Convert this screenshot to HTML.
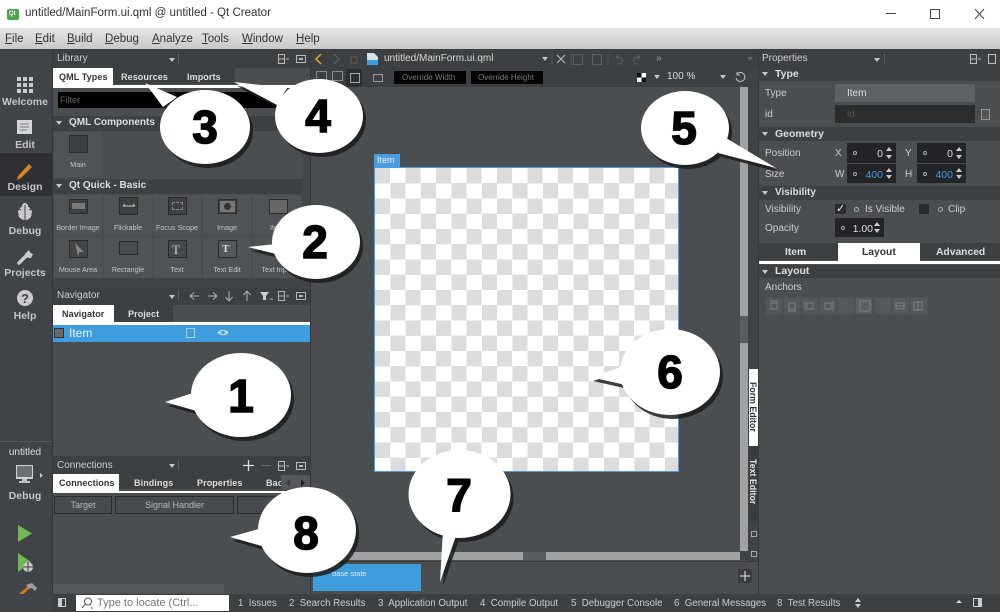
<!DOCTYPE html>
<html><head><meta charset="utf-8"><style>
html,body{margin:0;padding:0;background:#4b4e51}
#p{position:relative;width:1000px;height:612px;overflow:hidden;background:#4b4e51;font-family:"Liberation Sans",sans-serif;color:#d8d8d8}
#p div{position:absolute;box-sizing:border-box}
.t{position:absolute;white-space:nowrap;line-height:1}
.b{font-weight:bold}
.m{font-size:11.5px;color:#333;top:34px}
.sb{font-size:10.5px;font-weight:bold;color:#c4c6c8;width:52px;text-align:center}
.cell{width:50px;height:42px;background:#505356;border:1px solid #4a4d50}
.ic{width:19px;height:18px;background:#3e4042;border:1px solid #2b2c2e}
.lb{font-size:7.2px;color:#c2c4c6;text-align:center;width:50px}
.sec{background:#3e4144;height:15px}
.tab{font-size:9px;letter-spacing:.1px}
.rt{font-size:10.3px}
.h{font-size:10px;color:#ddd;font-weight:bold}
.spin{background:#222427;height:20px;width:49px}
.spin .n{position:absolute;right:13px;top:6px;font-size:10.5px;line-height:1;color:#ddd}
.spin .n.bl{color:#3f9fe0}
.spin .o{position:absolute;left:6px;top:8px;width:2px;height:2px;border:1px solid #aaa;border-radius:50%}
.spin .u{position:absolute;right:4px;top:4px;width:0;height:0;border:3px solid transparent;border-bottom:4px solid #ccc;border-top:0}
.spin .d{position:absolute;right:4px;bottom:4px;width:0;height:0;border:3px solid transparent;border-top:4px solid #ccc;border-bottom:0}
.tri{position:absolute;width:0;height:0;border:3px solid transparent;border-top:4px solid #c8c8c8;border-bottom:0}
.anch{width:18px;height:18px;background:#55585b;border:1px solid #4e5154;top:297px}
.ot{font-size:9.7px;color:#c9cbcd;top:599px}
.l{font-size:10px;color:#ccc}
</style></head><body><div id="p">

<!-- title bar -->
<div style="left:0;top:0;width:1000px;height:28px;background:#fff"></div>
<div style="left:7px;top:9px;width:12px;height:11px;background:#4ea64a;border-radius:2px"></div>
<span class="t" style="left:9px;top:11px;font-size:6px;color:#fff;font-weight:bold">Qt</span>
<span class="t" style="left:25px;top:8px;font-size:11.55px;color:#333">untitled/MainForm.ui.qml @ untitled - Qt Creator</span>
<svg style="position:absolute;left:880px;top:6px" width="120" height="16" fill="none" stroke="#444" stroke-width="1"><path d="M6 7.5H16"/><rect x="50.5" y="3.5" width="9" height="9"/><path d="M95 3L104 13M104 3L95 13"/></svg>

<!-- menu -->
<div style="left:0;top:28px;width:1000px;height:21px;background:linear-gradient(#e6e6e6,#c8c8c8)"></div>
<div style="left:0;top:49px;width:1000px;height:1px;background:#3a3c3e"></div>
<span class="t m" style="left:5px"><u>F</u>ile</span>
<span class="t m" style="left:35px"><u>E</u>dit</span>
<span class="t m" style="left:67px"><u>B</u>uild</span>
<span class="t m" style="left:105px"><u>D</u>ebug</span>
<span class="t m" style="left:152px"><u>A</u>nalyze</span>
<span class="t m" style="left:202px"><u>T</u>ools</span>
<span class="t m" style="left:242px"><u>W</u>indow</span>
<span class="t m" style="left:296px"><u>H</u>elp</span>

<!-- mode sidebar -->
<div style="left:0;top:50px;width:52px;height:562px;background:#404347"></div>
<div style="left:0;top:153px;width:52px;height:43px;background:#2e3033"></div>
<div style="left:0;top:441px;width:52px;height:1px;background:#55585b"></div>
<svg style="position:absolute;left:0;top:70px" width="52" height="240">
<g fill="#c8cacc"><rect x="17" y="7" width="4" height="4"/><rect x="23" y="7" width="4" height="4"/><rect x="29" y="7" width="4" height="4"/><rect x="17" y="13" width="4" height="4"/><rect x="23" y="13" width="4" height="4"/><rect x="29" y="13" width="4" height="4"/><rect x="17" y="19" width="4" height="4"/><rect x="23" y="19" width="4" height="4"/><rect x="29" y="19" width="4" height="4"/></g>
<rect x="17" y="50" width="15" height="14" fill="#d4d6d8"/><path d="M20 54H29M20 57H29M20 60H27" stroke="#777" stroke-width="1"/>
<path d="M18 106L29 94L32 97L21 108L17 110Z" fill="#d9832a"/>
<ellipse cx="25" cy="143" rx="7" ry="7" fill="#c8cacc"/><circle cx="25" cy="136" r="3" fill="#c8cacc"/><path d="M25 135V151M17 138L21 140M33 138L29 140M16 144H19M34 144H31" stroke="#404347" stroke-width="1"/>
<path d="M19 193L27 185" stroke="#c8cacc" stroke-width="3.5" stroke-linecap="round"/><path d="M25 184A5 5 0 0 0 31 188L33 184A5 5 0 0 1 29 180Z" fill="#c8cacc"/>
<circle cx="25" cy="228" r="8" fill="#c8cacc"/>
<text x="25" y="233" font-size="13" font-weight="bold" fill="#404347" text-anchor="middle" font-family="Liberation Sans, sans-serif">?</text>
</svg>
<span class="t sb" style="left:-1px;top:97px">Welcome</span>
<span class="t sb" style="left:-1px;top:140px">Edit</span>
<span class="t sb" style="left:-1px;top:182px">Design</span>
<span class="t sb" style="left:-1px;top:226px">Debug</span>
<span class="t sb" style="left:-1px;top:268px">Projects</span>
<span class="t sb" style="left:-1px;top:311px">Help</span>
<span class="t" style="left:0;top:448px;width:50px;text-align:center;font-size:10px;color:#ddd">untitled</span>
<svg style="position:absolute;left:14px;top:464px" width="32" height="26"><rect x="2" y="1" width="17" height="14" fill="#d0d2d4"/><rect x="3" y="2" width="15" height="11" fill="#6d7073"/><rect x="8" y="15" width="5" height="3" fill="#c0c2c4"/><rect x="5" y="17" width="11" height="2" fill="#c0c2c4"/><path d="M26 9V14L29 11.500Z" fill="#ccc"/></svg>
<span class="t sb" style="left:-1px;top:491px">Debug</span>
<svg style="position:absolute;left:14px;top:520px" width="26" height="90">
<path d="M4 5V22L18 13.500Z" fill="#73b856"/>
<path d="M4 33V52L17 42Z" fill="#73b856"/><ellipse cx="14" cy="47" rx="5" ry="5" fill="#c8cacc"/><path d="M14 42V52M9 47H19" stroke="#404347"/>
<path d="M4 77L16 66" stroke="#d0772a" stroke-width="3"/><path d="M12 65L18 63L23 68L21 71L18 68L15 69Z" fill="#9a9c9e"/>
</svg>

<!-- left panel -->
<div style="left:52px;top:50px;width:258px;height:18px;background:#3d4043"></div>
<span class="t" style="left:57px;top:54px;font-size:10px;color:#ccc">Library</span>
<div class="tri" style="left:169px;top:58px"></div>
<div style="left:178px;top:53px;width:1px;height:11px;background:#5a5d60"></div>
<svg style="position:absolute;left:276px;top:53px" width="32" height="12" fill="none" stroke="#bbb"><path d="M2.500 1.500H8.500V10.500H2.500ZM2.500 6H8.500"/><path d="M10 6H13" /><rect x="20.500" y="2.500" width="9" height="7"/><rect x="23" y="5" width="4" height="2" fill="#bbb" stroke="none"/></svg>

<div style="left:52px;top:68px;width:183px;height:16px;background:#3d4043"></div>
<div style="left:52px;top:85px;width:258px;height:3px;background:#fff"></div>
<div style="left:52px;top:68px;width:61px;height:18px;background:#fff"></div>
<span class="t b tab" style="left:59px;top:73px;color:#333">QML Types</span>
<span class="t b tab" style="left:121px;top:73px;color:#ddd">Resources</span>
<span class="t b tab" style="left:187px;top:73px;color:#ddd">Imports</span>
<div style="left:58px;top:92px;width:240px;height:16px;background:#000"></div>
<span class="t" style="left:60px;top:96px;font-size:9px;color:#666">Filter</span>

<div class="sec" style="left:52px;top:116px;width:250px;height:15px"></div>
<div class="tri" style="left:56px;top:121px"></div>
<span class="t h" style="left:69px;top:118px">QML Components</span>
<div class="cell" style="left:53px;top:131px;height:47px"></div>
<div class="ic" style="left:69px;top:135px"></div>
<span class="t lb" style="left:53px;top:161px">Main</span>
<div class="sec" style="left:52px;top:179px;width:250px"></div>
<div class="tri" style="left:56px;top:184px"></div>
<span class="t h" style="left:69px;top:181px">Qt Quick - Basic</span>

<div class="cell" style="left:53px;top:194px"></div><div class="ic" style="left:69px;top:199px;height:15px"></div>
<div style="left:72px;top:203px;width:13px;height:6px;background:#777"></div>
<span class="t lb" style="left:53px;top:224px">Border Image</span>
<div class="cell" style="left:103px;top:194px"></div><div class="ic" style="left:119px;top:197px"></div>
<svg style="position:absolute;left:120px;top:199px" width="18" height="14" stroke="#ccc" fill="none"><path d="M3 7H15M3 7L5 5.500M15 7L13 5.500"/></svg>
<span class="t lb" style="left:103px;top:224px">Flickable</span>
<div class="cell" style="left:152px;top:194px"></div><div class="ic" style="left:168px;top:197px"></div>
<div style="left:172px;top:202px;width:11px;height:8px;border:1px dashed #888"></div>
<span class="t lb" style="left:152px;top:224px">Focus Scope</span>
<div class="cell" style="left:202px;top:194px"></div><div class="ic" style="left:218px;top:199px;height:15px"></div>
<div style="left:220px;top:201px;width:15px;height:11px;background:#777"></div>
<div style="left:224px;top:203px;width:7px;height:7px;background:#333;border-radius:50%"></div>
<span class="t lb" style="left:202px;top:224px">Image</span>
<div class="cell" style="left:252px;top:194px"></div><div class="ic" style="left:269px;top:199px;height:15px;background:#666"></div>
<span class="t lb" style="left:252px;top:224px">Item</span>

<div class="cell" style="left:53px;top:237px"></div><div class="ic" style="left:69px;top:240px;background:#444"></div>
<svg style="position:absolute;left:71px;top:241px" width="15" height="16"><path d="M4 2L13 11L8.500 11L7 15Z" fill="#888"/></svg>
<span class="t lb" style="left:53px;top:266px">Mouse Area</span>
<div class="cell" style="left:103px;top:237px"></div><div class="ic" style="left:119px;top:241px;height:14px;background:#484a4c"></div>
<span class="t lb" style="left:103px;top:266px">Rectangle</span>
<div class="cell" style="left:152px;top:237px"></div><div class="ic" style="left:168px;top:240px;background:#46484a"></div>
<span class="t" style="left:172px;top:243px;font-size:13px;font-family:'Liberation Serif',serif;color:#ccc">T</span>
<span class="t lb" style="left:152px;top:266px">Text</span>
<div class="cell" style="left:202px;top:237px"></div><div class="ic" style="left:218px;top:240px;background:#55585a"></div>
<span class="t" style="left:222px;top:244px;font-size:11px;font-weight:bold;font-family:'Liberation Serif',serif;color:#ddd">T</span>
<span class="t lb" style="left:202px;top:266px">Text Edit</span>
<div class="cell" style="left:252px;top:237px"></div>
<span class="t lb" style="left:252px;top:266px">Text Input</span>

<div style="left:52px;top:278px;width:258px;height:10px;background:#424548"></div>
<div style="left:302px;top:88px;width:8px;height:190px;background:#44474a"></div>

<!-- navigator -->
<div style="left:52px;top:288px;width:258px;height:17px;background:#3d4043"></div>
<span class="t" style="left:57px;top:291px;font-size:10px;color:#ccc">Navigator</span>
<div class="tri" style="left:169px;top:295px"></div>
<div style="left:178px;top:290px;width:1px;height:11px;background:#5a5d60"></div>
<svg style="position:absolute;left:186px;top:289px" width="122" height="14" fill="none" stroke="#b0b2b4">
<path d="M4 7H13M4 7L8 3.500M4 7L8 10.500"/><path d="M22 7H31M31 7L27 3.500M31 7L27 10.500"/><path d="M43 2V12M43 12L39.500 8M43 12L46.500 8"/><path d="M61 12V2M61 2L57.500 6M61 2L64.500 6"/>
<path d="M74 3H83L80 7V11H77V7Z" fill="#ccc" stroke="none"/><path d="M84 10H87" />
<path d="M92.500 2.500H98.500V11.500H92.500ZM92.500 7H98.500M100 7H103"/><rect x="110.500" y="3.500" width="9" height="7"/><rect x="113" y="6" width="4" height="2" fill="#bbb" stroke="none"/>
</svg>
<div style="left:52px;top:305px;width:121px;height:17px;background:#3d4043"></div>
<div style="left:52px;top:305px;width:62px;height:18px;background:#fff"></div>
<span class="t b tab" style="left:62px;top:310px;color:#333">Navigator</span>
<span class="t b tab" style="left:128px;top:310px;color:#ddd">Project</span>
<div style="left:52px;top:322px;width:258px;height:3px;background:#fff"></div>
<div style="left:52px;top:325px;width:258px;height:17px;background:#3f9ddd"></div>
<div style="left:54px;top:328px;width:10px;height:10px;background:#6a6a6a;border:1px solid #333"></div>
<span class="t" style="left:69px;top:327px;font-size:12px;color:#eaf4fb">Item</span>
<div style="left:186px;top:328px;width:9px;height:10px;border:1px solid #a9d3ef"></div>
<svg style="position:absolute;left:216px;top:328px" width="14" height="9"><path d="M1 4.500Q7 -1 13 4.500Q7 10 1 4.500Z" fill="#b9dcf3"/><circle cx="7" cy="4.500" r="1.800" fill="#3f9ddd"/></svg>

<!-- connections -->
<div style="left:52px;top:456px;width:258px;height:18px;background:#3d4043"></div>
<span class="t" style="left:57px;top:461px;font-size:10px;color:#ccc">Connections</span>
<div class="tri" style="left:169px;top:464px"></div>
<div style="left:178px;top:459px;width:1px;height:11px;background:#5a5d60"></div>
<svg style="position:absolute;left:240px;top:459px" width="68" height="14" fill="none"><path d="M3 6.500H14M8.500 1V12" stroke="#ddd" stroke-width="1.300"/><path d="M21 6.500H31" stroke="#666"/><g stroke="#bbb"><path d="M38.500 2.500H44.500V11.500H38.500ZM38.500 7H44.500M46 7H49"/><rect x="56.500" y="3.500" width="9" height="7"/></g><rect x="59" y="6" width="4" height="2" fill="#bbb"/></svg>
<div style="left:52px;top:474px;width:258px;height:15px;background:#3d4043"></div>
<div style="left:52px;top:474px;width:67px;height:17px;background:#fff"></div>
<div style="left:52px;top:491px;width:258px;height:2px;background:#fff"></div>
<span class="t b tab" style="left:59px;top:479px;color:#333">Connections</span>
<span class="t b tab" style="left:134px;top:479px;color:#ddd">Bindings</span>
<span class="t b tab" style="left:197px;top:479px;color:#ddd">Properties</span>
<span class="t b tab" style="left:266px;top:479px;color:#ddd">Bac</span>
<div style="left:281px;top:475px;width:29px;height:14px;background:#55585b"></div>
<div style="left:286px;top:479px;border:4px solid transparent;border-right:4px solid #3a3c3e;border-left:0"></div>
<div style="left:301px;top:479px;border:4px solid transparent;border-left:4px solid #222;border-right:0"></div>
<div style="left:54px;top:496px;width:58px;height:18px;background:#484b4e;border:1px solid #2a2c2e"></div>
<span class="t" style="left:54px;top:501px;width:58px;text-align:center;font-size:9px;color:#b5b7b9">Target</span>
<div style="left:115px;top:496px;width:119px;height:18px;background:#484b4e;border:1px solid #2a2c2e"></div>
<span class="t" style="left:115px;top:501px;width:119px;text-align:center;font-size:9px;color:#b5b7b9">Signal Handler</span>
<div style="left:237px;top:496px;width:60px;height:18px;background:#484b4e;border:1px solid #2a2c2e"></div>
<div style="left:52px;top:584px;width:172px;height:9px;background:#55585b"></div>

<div style="left:52px;top:50px;width:1px;height:544px;background:#35373a"></div>
<div style="left:310px;top:50px;width:1px;height:544px;background:#35373a"></div>

<!-- centre toolbar -->
<div style="left:311px;top:50px;width:447px;height:19px;background:#3d4043"></div>
<div style="left:311px;top:69px;width:447px;height:18px;background:#3d4043"></div>
<svg style="position:absolute;left:311px;top:50px" width="350" height="38" fill="none">
<path d="M10 4L5 9L10 14" stroke="#e0a92b" stroke-width="1.500"/><path d="M23 4L28 9L23 14" stroke="#666"/>
<rect x="40" y="7" width="6" height="6" stroke="#5c5e60"/>
<path d="M56 3H63L67 7V14H56Z" fill="#d6dee6"/><rect x="56" y="10" width="11" height="5" fill="#3f9ddd"/>
<path d="M246 5L254 13M254 5L246 13" stroke="#b5b7b9" stroke-width="1.200"/><rect x="262.500" y="4.500" width="9" height="10" stroke="#5c5e60"/><rect x="281.500" y="4.500" width="9" height="10" stroke="#5c5e60"/>
<path d="M241 3V15M260 3V15M297 3V15" stroke="#55585b"/>
<path d="M305 7L308 5M305 7L308 9M305 7H309A4 4 0 0 1 309 14H306" stroke="#5c5e60"/><path d="M329 7L326 5M329 7L326 9M329 7H325A4 4 0 0 0 325 14H328" stroke="#5c5e60"/>
<path d="M5.500 21.500H15.500V30.500H5.500ZM21.500 21.500H31.500V30.500H21.500Z" stroke="#8a8c8e"/>
</svg>
<span class="t" style="left:384px;top:54px;font-size:10px;color:#d8d8d8">untitled/MainForm.ui.qml</span>
<div class="tri" style="left:542px;top:57px"></div>
<span class="t" style="left:656px;top:54px;font-size:10px;color:#999">»</span>
<div class="tri" style="left:747px;top:57px;border-top-color:#666"></div>
<div style="left:346px;top:69px;width:16px;height:18px;background:#2c2e30"></div>
<div style="left:350px;top:73px;width:10px;height:10px;border:1px solid #aaa"></div>
<div style="left:373px;top:74px;width:10px;height:8px;border:1px solid #999"></div>
<div style="left:394px;top:71px;width:72px;height:13px;background:#050505"></div>
<span class="t" style="left:402px;top:74px;font-size:8px;color:#777">Override Width</span>
<div style="left:471px;top:71px;width:72px;height:13px;background:#050505"></div>
<span class="t" style="left:478px;top:74px;font-size:8px;color:#777">Override Height</span>
<div style="left:637px;top:73px;width:9px;height:9px;background:conic-gradient(#fff 25%,#111 0 50%,#fff 0 75%,#111 0)"></div>
<div class="tri" style="left:654px;top:75px"></div>
<span class="t" style="left:667px;top:72px;font-size:10px;color:#ddd">100 %</span>
<div class="tri" style="left:720px;top:75px"></div>
<svg style="position:absolute;left:734px;top:71px" width="12" height="12" fill="none"><path d="M3 3A4.500 4.500 0 1 1 2 7M3 1V4H6" stroke="#bbb"/></svg>

<!-- canvas -->
<div style="left:311px;top:87px;width:429px;height:464px;background:#4b4e51"></div>
<div style="left:374px;top:154px;width:26px;height:13px;background:#4b9be0"></div>
<span class="t" style="left:377px;top:156px;font-size:9px;color:#eef">Item</span>
<div style="left:374px;top:167px;width:305px;height:305px;background-color:#fff;background-image:conic-gradient(#fff 25%,#dcdcdc 0 50%,#fff 0 75%,#dcdcdc 0);background-size:30.500px 30.500px;background-position:0 0;border:1.500px solid #4b9be0"></div>

<!-- scrollbars -->
<div style="left:740px;top:87px;width:8px;height:464px;background:#a0a2a4"></div>
<div style="left:740px;top:316px;width:8px;height:27px;background:#5a5d60"></div>
<div style="left:311px;top:552px;width:429px;height:8px;background:#a0a2a4"></div>
<div style="left:523px;top:552px;width:23px;height:8px;background:#5a5d60"></div>
<div style="left:748px;top:69px;width:10px;height:492px;background:#404346"></div>
<div style="left:740px;top:551px;width:18px;height:9px;background:#404346"></div>
<div style="left:311px;top:561px;width:447px;height:1px;background:#393b3e"></div>
<div style="left:749px;top:369px;width:9px;height:77px;background:#fff"></div>
<div style="left:749px;top:446px;width:9px;height:76px;background:#3a3d40"></div>
<span class="t b" style="left:748px;top:382px;font-size:8.800px;color:#333;writing-mode:vertical-rl;line-height:10px">Form Editor</span>
<span class="t b" style="left:748px;top:459px;font-size:8.800px;color:#e8e8e8;writing-mode:vertical-rl;line-height:10px">Text Editor</span>
<div style="left:751px;top:531px;width:6px;height:6px;border:1px solid #aaa"></div>
<div style="left:751px;top:551px;width:6px;height:6px;border:1px solid #aaa"></div>
<div style="left:758px;top:50px;width:1px;height:544px;background:#35373a"></div>

<!-- states -->
<div style="left:313px;top:564px;width:108px;height:27px;background:#3f9ddd"></div>
<span class="t" style="left:332px;top:570px;font-size:7.500px;color:#d8eaf7">base state</span>
<div style="left:738px;top:569px;width:14px;height:14px;background:#3a3c3f"></div>
<svg style="position:absolute;left:738px;top:569px" width="14" height="14"><path d="M2 7H12M7 2V12" stroke="#ccc" stroke-width="1.300"/></svg>

<!-- right panel -->
<div style="left:759px;top:50px;width:241px;height:17px;background:#3d4043"></div>
<span class="t" style="left:762px;top:54px;font-size:10px;color:#ccc">Properties</span>
<div class="tri" style="left:874px;top:58px"></div>
<div style="left:884px;top:53px;width:1px;height:11px;background:#5a5d60"></div>
<svg style="position:absolute;left:968px;top:53px" width="32" height="12" fill="none" stroke="#bbb"><path d="M2.500 1.500H8.500V10.500H2.500ZM2.500 6H8.500M10 6H13"/><rect x="20.500" y="1.500" width="7" height="9"/></svg>
<div class="sec" style="left:759px;top:67px;width:241px;height:14px"></div>
<div class="tri" style="left:762px;top:72px"></div>
<span class="t b" style="left:775px;top:69px;font-size:10.500px;color:#ddd">Type</span>
<span class="t l" style="left:765px;top:89px">Type</span>
<div style="left:835px;top:84px;width:140px;height:18px;background:#5e6164"></div>
<span class="t" style="left:847px;top:89px;font-size:10px;color:#ddd">Item</span>
<span class="t l" style="left:765px;top:110px">id</span>
<div style="left:835px;top:105px;width:140px;height:18px;background:#2a2c2e"></div>
<span class="t" style="left:847px;top:110px;font-size:10px;color:#555">id</span>
<div style="left:981px;top:109px;width:9px;height:11px;border:1px solid #999;background:#555"></div>
<div class="sec" style="left:759px;top:127px;width:241px;height:14px"></div>
<div class="tri" style="left:762px;top:132px"></div>
<span class="t b" style="left:775px;top:129px;font-size:10.500px;color:#ddd">Geometry</span>
<span class="t l" style="left:765px;top:149px">Position</span>
<span class="t l" style="left:765px;top:170px">Size</span>
<span class="t l" style="left:835px;top:149px">X</span>
<span class="t l" style="left:835px;top:170px">W</span>
<span class="t l" style="left:905px;top:149px">Y</span>
<span class="t l" style="left:905px;top:170px">H</span>
<div class="spin" style="left:847px;top:143px"><i class="o"></i><span class="n">0</span><i class="u"></i><i class="d"></i></div>
<div class="spin" style="left:917px;top:143px"><i class="o"></i><span class="n">0</span><i class="u"></i><i class="d"></i></div>
<div class="spin" style="left:847px;top:164px;height:19px"><i class="o"></i><span class="n bl">400</span><i class="u"></i><i class="d"></i></div>
<div class="spin" style="left:917px;top:164px;height:19px"><i class="o"></i><span class="n bl">400</span><i class="u"></i><i class="d"></i></div>
<div class="sec" style="left:759px;top:186px;width:241px;height:14px"></div>
<div class="tri" style="left:762px;top:191px"></div>
<span class="t b" style="left:775px;top:188px;font-size:10px;color:#ddd">Visibility</span>
<span class="t l" style="left:765px;top:205px">Visibility</span>
<div style="left:835px;top:204px;width:11px;height:10px;background:#2a2c2e"></div>
<span class="t" style="left:836px;top:204px;font-size:11px;color:#eee">✓</span>
<div style="left:854px;top:207px;width:5px;height:5px;border:1px solid #aaa;border-radius:50%"></div>
<span class="t l" style="left:865px;top:205px">Is Visible</span>
<div style="left:919px;top:204px;width:10px;height:10px;background:#2a2c2e"></div>
<div style="left:938px;top:207px;width:5px;height:5px;border:1px solid #aaa;border-radius:50%"></div>
<span class="t l" style="left:948px;top:205px">Clip</span>
<span class="t l" style="left:765px;top:224px">Opacity</span>
<div class="spin" style="left:835px;top:218px;height:19px"><i class="o"></i><span class="n" style="right:11px">1.00</span><i class="u"></i><i class="d"></i></div>
<div style="left:759px;top:243px;width:241px;height:17px;background:#3d4043"></div>
<div style="left:838px;top:243px;width:82px;height:18px;background:#fff"></div>
<div style="left:759px;top:261px;width:241px;height:3px;background:#fff"></div>
<span class="t b rt" style="left:785px;top:248px;color:#ddd">Item</span>
<span class="t b rt" style="left:862px;top:248px;color:#333">Layout</span>
<span class="t b rt" style="left:936px;top:248px;color:#ddd">Advanced</span>
<div class="sec" style="left:759px;top:265px;width:241px;height:13px"></div>
<div class="tri" style="left:762px;top:270px"></div>
<span class="t b" style="left:775px;top:266px;font-size:10.500px;color:#ddd">Layout</span>
<span class="t l" style="left:765px;top:283px">Anchors</span>
<div class="anch" style="left:765px"></div><div class="anch" style="left:783px"></div><div class="anch" style="left:801px"></div><div class="anch" style="left:819px"></div><div class="anch" style="left:837px"></div><div class="anch" style="left:855px;background:#5c5f62"></div><div class="anch" style="left:874px"></div><div class="anch" style="left:892px"></div><div class="anch" style="left:910px"></div>
<svg style="position:absolute;left:765px;top:297px" width="165" height="18" fill="none" stroke="#7b7e81"><rect x="6" y="6" width="6" height="6"/><path d="M5 4H13"/><rect x="24" y="6" width="6" height="6"/><path d="M23 14H31"/><rect x="42" y="6" width="6" height="6"/><path d="M40 4V14"/><rect x="60" y="6" width="6" height="6"/><path d="M68 4V14"/><rect x="95" y="4" width="10" height="10"/><rect x="131" y="6" width="8" height="6"/><path d="M130 9H140"/><rect x="149" y="5" width="8" height="8"/><path d="M153 4V14"/></svg>

<!-- bottom bar -->
<div style="left:52px;top:594px;width:948px;height:18px;background:#3d4043"></div>
<div style="left:0;top:594px;width:52px;height:18px;background:#404347"></div>
<div style="left:58px;top:598px;width:8px;height:9px;border:1px solid #ccc;border-left:4px solid #ccc"></div>
<div style="left:76px;top:595px;width:153px;height:16px;background:#fff"></div>
<svg style="position:absolute;left:80px;top:596px" width="16" height="14" fill="none" stroke="#555"><circle cx="8" cy="5.500" r="3.500"/><path d="M5.500 8L2 12"/><path d="M11 12H13"/></svg>
<span class="t" style="left:97px;top:598px;font-size:11px;color:#777">Type to locate (Ctrl...</span>
<span class="t ot" style="left:238px">1&nbsp; Issues</span>
<span class="t ot" style="left:289px">2&nbsp; Search Results</span>
<span class="t ot" style="left:378px">3&nbsp; Application Output</span>
<span class="t ot" style="left:480px">4&nbsp; Compile Output</span>
<span class="t ot" style="left:571px">5&nbsp; Debugger Console</span>
<span class="t ot" style="left:674px">6&nbsp; General Messages</span>
<span class="t ot" style="left:777px">8&nbsp; Test Results</span>
<div style="left:855px;top:598px;border:3px solid transparent;border-bottom:4px solid #ccc;border-top:0"></div>
<div style="left:855px;top:604px;border:3px solid transparent;border-top:4px solid #ccc;border-bottom:0"></div>
<div style="left:956px;top:600px;border:3px solid transparent;border-bottom:3px solid #ddd;border-top:0"></div>
<div style="left:973px;top:598px;width:9px;height:9px;border:1px solid #ccc;border-right:4px solid #ccc"></div>

<!-- callouts -->
<svg style="position:absolute;left:0;top:0" width="1000" height="612">
<g fill="#1c1c1c" transform="translate(3,4)" opacity=".85">
<ellipse cx="241" cy="395" rx="50" ry="42"/><path d="M165 402L196 392L200 412Z"/>
<ellipse cx="316" cy="242" rx="44" ry="37"/><path d="M248 247L276 244L276 254Z"/>
<ellipse cx="205" cy="127" rx="45" ry="37"/><path d="M145 83L177 97L163 107Z"/>
<ellipse cx="319" cy="116" rx="44" ry="37"/><path d="M234 82L287 88L277 105Z"/>
<ellipse cx="685" cy="128" rx="44" ry="37"/><path d="M776 168L726 138L718 153Z"/>
<ellipse cx="670" cy="372" rx="50" ry="43"/><path d="M590 377L628 365L630 386Z"/>
<ellipse cx="459.500" cy="494" rx="51" ry="44"/><path d="M440 582L443 530L457 533Z"/>
<ellipse cx="307" cy="530" rx="49" ry="43"/><path d="M230 537L262 528L265 547Z"/>
</g>
<g fill="#fff">
<ellipse cx="241" cy="395" rx="50" ry="42"/><path d="M165 402L196 392L200 412Z"/>
<ellipse cx="316" cy="242" rx="44" ry="37"/><path d="M248 247L276 244L276 254Z"/>
<ellipse cx="205" cy="127" rx="45" ry="37"/><path d="M145 83L177 97L163 107Z"/>
<ellipse cx="319" cy="116" rx="44" ry="37"/><path d="M234 82L287 88L277 105Z"/>
<ellipse cx="685" cy="128" rx="44" ry="37"/><path d="M776 168L726 138L718 153Z"/>
<ellipse cx="670" cy="372" rx="50" ry="43"/><path d="M590 377L628 365L630 386Z"/>
<ellipse cx="459.500" cy="494" rx="51" ry="44"/><path d="M440 582L443 530L457 533Z"/>
<ellipse cx="307" cy="530" rx="49" ry="43"/><path d="M230 537L262 528L265 547Z"/>
</g>
<g font-family="Liberation Sans, sans-serif" font-weight="bold" font-size="46" fill="#000" stroke="#000" stroke-width="1.500" text-anchor="middle">
<text x="241" y="412">1</text><text x="315" y="258">2</text><text x="205" y="143">3</text><text x="318" y="132">4</text><text x="684" y="144">5</text><text x="670" y="388">6</text><text x="459" y="511">7</text><text x="306" y="549">8</text>
</g>
</svg>
</div></body></html>
